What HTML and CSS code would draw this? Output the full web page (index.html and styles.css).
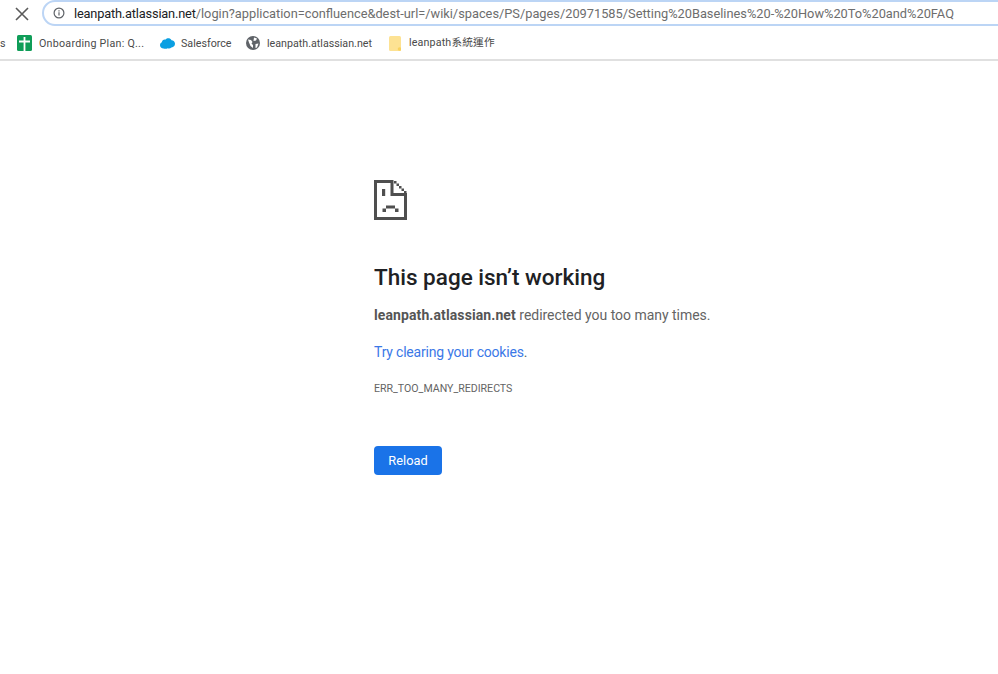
FILE: index.html
```html
<!DOCTYPE html>
<html lang="en">
<head>
<meta charset="utf-8">
<title>leanpath.atlassian.net</title>
<link rel="stylesheet" href="styles.css">
</head>
<body>
<header class="chrome">
  <div class="toolbar">
    <svg class="close" width="14" height="14" viewBox="0 0 14 14"><path d="M1 1l12 12M13 1L1 13" stroke="#5a5a5a" stroke-width="1.6" fill="none"/></svg>
    <div class="omnibox">
      <svg class="info" width="12" height="12" viewBox="0 0 12 12"><circle cx="6" cy="6" r="4.9" fill="none" stroke="#5f6368" stroke-width="1.2"/><path d="M6 5.3v3.2M6 3.2v1.2" stroke="#5f6368" stroke-width="1.2"/></svg>
      <span class="url"><span class="host">leanpath.atlassian.net</span>/login?application=confluence&amp;dest-url=/wiki/spaces/PS/pages/20971585/Setting%20Baselines%20-%20How%20To%20and%20FAQ</span>
    </div>
  </div>
  <nav class="bookmarks">
    <span class="mark stub">s</span>
    <span class="mark m-sheet">
      <svg width="15" height="16" viewBox="0 0 15 16"><rect width="15" height="16" rx="1.5" fill="#0f9d58"/><path d="M2 6.500h11M7.500 2v14" stroke="#fff" stroke-width="1.800"/></svg>
      <span class="sheet-label">Onboarding Plan: Q...</span>
    </span>
    <span class="mark m-sf">
      <svg width="15" height="11" viewBox="0 0 15 11"><path d="M3.5 10.5C1.500 10.500 0 9 0 7.200 0 5.700 .8 4.800 1.800 4.300 2 2.200 3.800 1 5.600 1.500 6.400.5 7.700 0 9 .3 10.200.6 11 1.300 11.500 2.200 13.500 2.200 15 3.800 15 5.800 15 8 13.300 9.600 11.300 9.400 10.500 10.400 9 10.800 7.800 10.200 6.500 11 4.800 11 3.500 10.500Z" fill="#0a9fe2"/></svg>
      <span>Salesforce</span>
    </span>
    <span class="mark m-globe">
      <svg width="14" height="14" viewBox="0 0 14 14"><circle cx="7" cy="7" r="7" fill="#5f6368"/><path d="M2 3.500l3 .5 1.500 2-1 1.500 1.500 1.500v3L4.500 10 3 6.500ZM8 1.500l3 1-1 2-2.500.5ZM9.500 8l3-.5-1.500 4-1.500 .5Z" fill="#fff"/></svg>
      <span>leanpath.atlassian.net</span>
    </span>
    <span class="mark m-folder">
      <svg width="12" height="15" viewBox="0 0 12 15"><rect width="12" height="15" rx="1.500" fill="#fde293"/><circle cx="10.500" cy="13" r="1.800" fill="#f9d25e"/></svg>
      <span class="folder-label">leanpath系統運作</span>
    </span>
  </nav>
</header>
<main class="error">
  <svg class="sad" width="33" height="40" viewBox="0 0 33 40">
    <path d="M1.500 1.500h16.500v13h13.500V38.500H1.500Z" fill="none" stroke="#4f4f4f" stroke-width="3"/>
    <path d="M20 1h2.500v2.500H20ZM22.500 3.500H25V6h-2.500ZM25 6h2.500v2.500H25ZM27.500 8.500H30V11h-2.500ZM30 11h2.500v2.500H30Z" fill="#4f4f4f"/>
    <path d="M8 9h3.200v7H8ZM12 25.500h9v3h-9ZM8.500 28.500h3.500v3.500H8.500ZM21 28.500h3.500v3.500H21Z" fill="#4f4f4f"/>
  </svg>
  <h1 class="title">This page isn’t working</h1>
  <p class="line"><strong>leanpath.atlassian.net</strong> redirected you too many times.</p>
  <p class="line link-line"><a href="#">Try clearing your cookies</a>.</p>
  <p class="code">ERR_TOO_MANY_REDIRECTS</p>
  <button class="reload">Reload</button>
</main>
</body>
</html>
```
FILE: styles.css
```css
html, body {
  margin: 0;
  padding: 0;
  background: #fff;
}
body {
  width: 998px;
  height: 674px;
  overflow: hidden;
  font-family: Roboto, "Noto Sans CJK TC", sans-serif;
}
.chrome {
  height: 59px;
  border-bottom: 2px solid #e0e0e0;
  overflow: hidden;
}
.toolbar {
  display: flex;
  align-items: center;
  height: 26px;
  padding-left: 15px;
}
.close {
  flex: none;
  margin-right: 13px;
  margin-top: 1px;
}
.omnibox {
  flex: 1;
  height: 26px;
  margin-right: -30px;
  display: flex;
  align-items: center;
  border: 2px solid #bcd5f5;
  border-radius: 13px;
  padding-left: 9px;
  box-sizing: border-box;
}
.info {
  flex: none;
  margin-right: 9px;
}
.url {
  font-size: 12.800px;
  color: #6d6d6d;
  white-space: nowrap;
}
.host {
  color: #202124;
  letter-spacing: -0.18px;
}
.bookmarks {
  display: flex;
  align-items: center;
  height: 16px;
  margin-top: 9px;
  font-size: 10.700px;
  color: #4a4a4a;
  white-space: nowrap;
}
.mark {
  display: flex;
  align-items: center;
  flex: none;
}
.stub {
  width: 17px;
}
.sheet-label { letter-spacing: 0.25px; }
.m-sheet svg { margin-right: 7px; }
.m-sheet { width: 143px; }
.m-sf svg { margin-right: 6px; }
.m-sf { width: 86px; }
.m-globe svg { margin-right: 7px; }
.m-globe { width: 143px; }
.m-folder svg { margin-right: 8px; }
.folder-label { line-height: 14px; letter-spacing: 0.15px; }
.error {
  display: flex;
  flex-direction: column;
  align-items: flex-start;
  padding: 119px 0 0 374px;
}
.sad {
  display: block;
}
.title {
  margin: 43px 0 0;
  font-size: 22.500px;
  line-height: 28px;
  font-weight: 500;
  color: #202124;
}
.line {
  margin: 14px 0 0;
  font-size: 14px;
  line-height: 20px;
  letter-spacing: -0.03px;
  color: #646464;
}
.line strong {
  font-weight: 700;
  color: #555;
  letter-spacing: 0.1px;
}
.link-line {
  margin-top: 17px;
}
.link-line a {
  color: #3b78e7;
  text-decoration: none;
  letter-spacing: -0.2px;
}
.code {
  margin: 19px 0 0;
  font-size: 10.600px;
  line-height: 16px;
  color: #646464;
}
.reload {
  margin-top: 49px;
  width: 68px;
  height: 29px;
  padding: 0;
  border: 0;
  border-radius: 4px;
  background: #1a73e8;
  color: #fff;
  font: 400 12.800px "Roboto", sans-serif;
}
```
